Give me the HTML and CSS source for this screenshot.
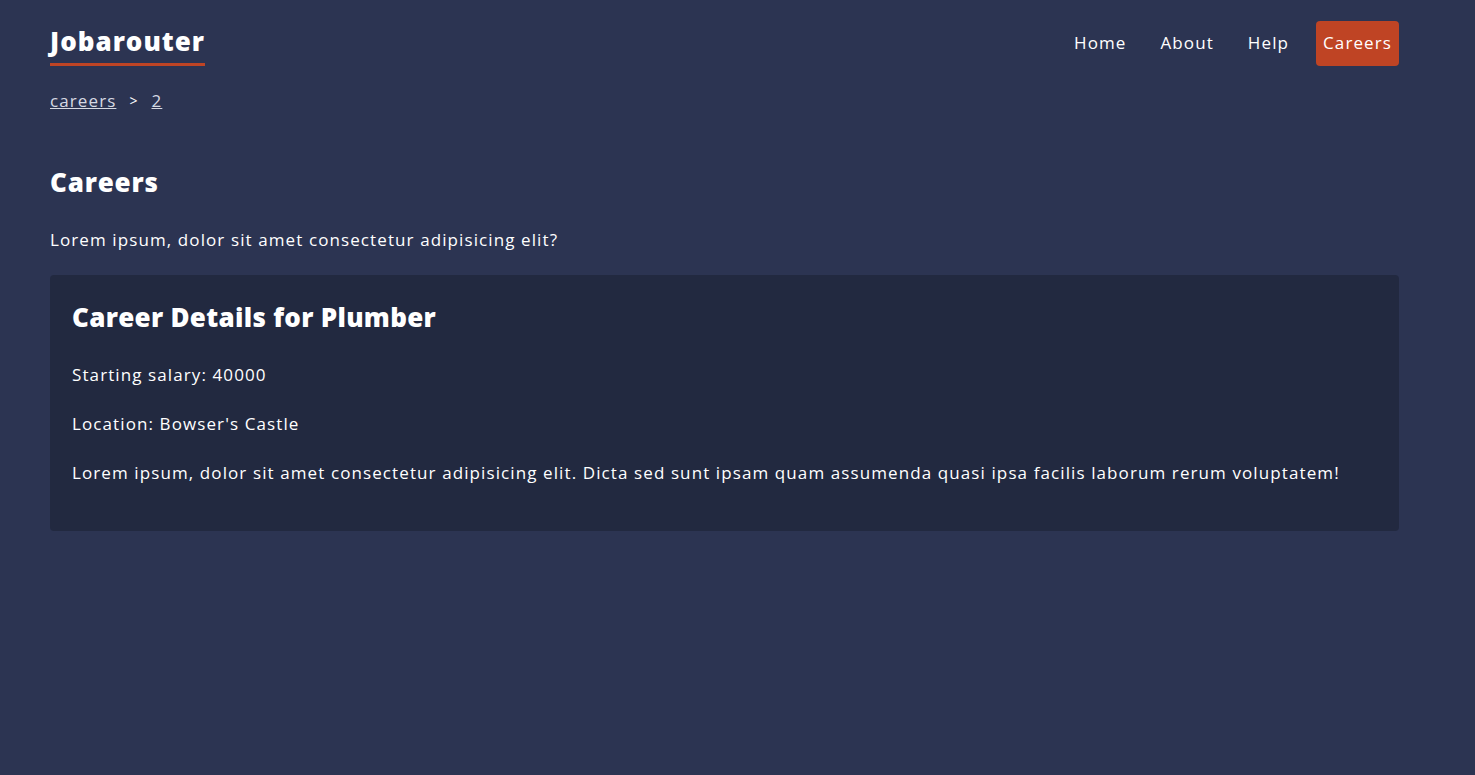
FILE: index.html
```html
<!DOCTYPE html>
<html lang="en">
<head>
<meta charset="utf-8">
<title>Jobarouter</title>
<link rel="stylesheet" href="styles.css">
</head>
<body>
<div class="root">
  <header class="header">
    <nav class="nav">
      <h1 class="logo">Jobarouter</h1>
      <div class="links">
        <a class="link" href="#">Home</a>
        <a class="link" href="#">About</a>
        <a class="link" href="#">Help</a>
        <a class="link active" href="#">Careers</a>
      </div>
    </nav>
    <div class="breadcrumbs">
      <a class="crumb" href="#">careers</a>
      <span class="sep">&gt;</span>
      <a class="crumb" href="#">2</a>
    </div>
  </header>
  <main class="main">
    <h2 class="title">Careers</h2>
    <p class="intro">Lorem ipsum, dolor sit amet consectetur adipisicing elit?</p>
    <div class="card">
      <h2 class="card-title">Career Details for Plumber</h2>
      <p class="text">Starting salary: 40000</p>
      <p class="text">Location: Bowser's Castle</p>
      <p class="text">Lorem ipsum, dolor sit amet consectetur adipisicing elit. Dicta sed sunt ipsam quam assumenda quasi ipsa facilis laborum rerum voluptatem!</p>
    </div>
  </main>
</div>
</body>
</html>
```

FILE: styles.css
```css
* { box-sizing: border-box; }
html, body {
  margin: 0;
  padding: 0;
  background: #2c3452;
  color: #ffffff;
  font-family: "Open Sans", "Noto Sans", sans-serif;
  font-size: 17px;
  letter-spacing: 1.1px;
}
.root {
  width: 1349px;
  margin-left: 50px;
}
.header {
  padding-top: 21px;
}
.nav {
  display: flex;
  justify-content: space-between;
  align-items: flex-start;
}
.logo {
  margin: 4px 0 0;
  font-size: 26px;
  font-weight: 800;
  letter-spacing: 1px;
  line-height: 32px;
  padding-bottom: 6px;
  border-bottom: 3px solid #bf4424;
}
.links {
  display: flex;
  gap: 20px;
}
.link {
  color: #ffffff;
  text-decoration: none;
  padding: 9px 7px 11px;
  line-height: 25px;
  border-radius: 4px;
}
.active {
  background: #bf4424;
}
.breadcrumbs {
  margin-top: 23px;
  display: flex;
  gap: 13px;
  line-height: 24px;
}
.crumb {
  color: #d6d9e2;
}
.sep {
  color: #ffffff;
  font-size: 14px;
}
.main {
  padding-top: 50px;
}
.title {
  margin: 0;
  font-size: 26px;
  font-weight: 800;
  letter-spacing: 0.8px;
  line-height: 38px;
}
.intro {
  margin: 27px 0 0;
  line-height: 24px;
}
.card {
  margin-top: 23px;
  background: #222940;
  border-radius: 4px;
  padding: 22px 22px 46px;
}
.card-title {
  margin: 0;
  font-size: 26px;
  font-weight: 800;
  letter-spacing: 0.3px;
  line-height: 40px;
}
.text {
  margin: 25px 0 0;
  line-height: 24px;
}
.card-title + .text {
  margin-top: 26px;
}
```
